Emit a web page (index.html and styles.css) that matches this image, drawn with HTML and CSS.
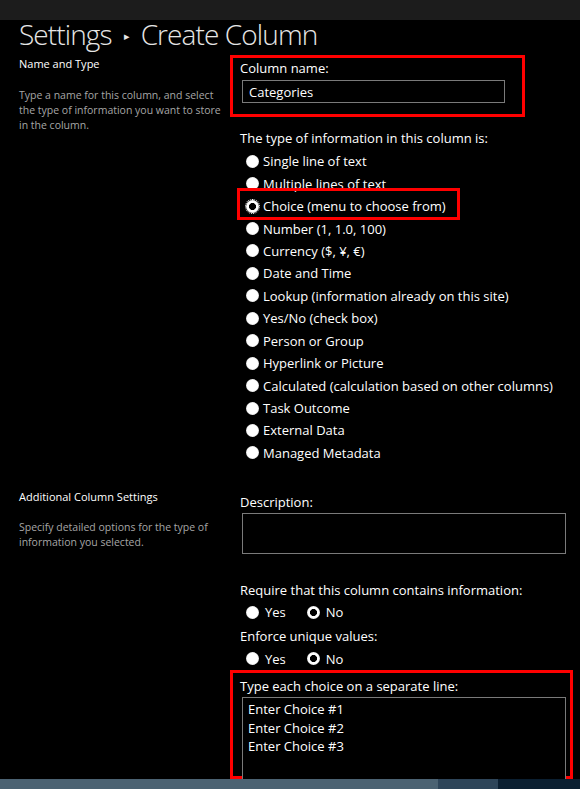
FILE: index.html
```html
<!DOCTYPE html>
<html lang="en">
<head>
<meta charset="utf-8">
<title>Settings - Create Column</title>
<link rel="stylesheet" href="styles.css">
</head>
<body>
<div class="topbar"></div>
<h1 class="title"><span>Settings</span><span class="crumb-sep">&#9656;</span><span>Create Column</span></h1>

<section class="section section-name">
  <div class="side">
    <h2 class="side-title">Name and Type</h2>
    <p class="side-desc">Type a name for this column, and select<br>the type of information you want to store<br>in the column.</p>
  </div>
  <div class="main">
    <div class="highlight hl-name">
      <label class="field-label" for="colname">Column name:</label>
      <input class="text-input" id="colname" type="text" value="Categories">
    </div>
    <div class="field-label type-label">The type of information in this column is:</div>
    <ul class="radio-list">
      <li class="radio-row"><input type="radio" name="type" class="radio"><span>Single line of text</span></li>
      <li class="radio-row"><input type="radio" name="type" class="radio"><span>Multiple lines of text</span></li>
      <li class="radio-row marked"><input type="radio" name="type" class="radio focused" checked><span>Choice (menu to choose from)</span></li>
      <li class="radio-row"><input type="radio" name="type" class="radio"><span>Number (1, 1.0, 100)</span></li>
      <li class="radio-row"><input type="radio" name="type" class="radio"><span>Currency ($, ¥, €)</span></li>
      <li class="radio-row"><input type="radio" name="type" class="radio"><span>Date and Time</span></li>
      <li class="radio-row"><input type="radio" name="type" class="radio"><span>Lookup (information already on this site)</span></li>
      <li class="radio-row"><input type="radio" name="type" class="radio"><span>Yes/No (check box)</span></li>
      <li class="radio-row"><input type="radio" name="type" class="radio"><span>Person or Group</span></li>
      <li class="radio-row"><input type="radio" name="type" class="radio"><span>Hyperlink or Picture</span></li>
      <li class="radio-row"><input type="radio" name="type" class="radio"><span>Calculated (calculation based on other columns)</span></li>
      <li class="radio-row"><input type="radio" name="type" class="radio"><span>Task Outcome</span></li>
      <li class="radio-row"><input type="radio" name="type" class="radio"><span>External Data</span></li>
      <li class="radio-row"><input type="radio" name="type" class="radio"><span>Managed Metadata</span></li>
    </ul>
  </div>
</section>

<section class="section section-extra">
  <div class="side">
    <h2 class="side-title">Additional Column Settings</h2>
    <p class="side-desc">Specify detailed options for the type of<br>information you selected.</p>
  </div>
  <div class="main">
    <div class="field-label">Description:</div>
    <textarea class="text-area desc-area"></textarea>
    <div class="field-label req-label">Require that this column contains information:</div>
    <div class="inline-radios req-radios">
      <label class="radio-row"><input type="radio" name="req" class="radio"><span>Yes</span></label>
      <label class="radio-row"><input type="radio" name="req" class="radio" checked><span>No</span></label>
    </div>
    <div class="field-label uniq-label">Enforce unique values:</div>
    <div class="inline-radios uniq-radios">
      <label class="radio-row"><input type="radio" name="uniq" class="radio"><span>Yes</span></label>
      <label class="radio-row"><input type="radio" name="uniq" class="radio" checked><span>No</span></label>
    </div>
    <div class="highlight hl-choices">
      <div class="field-label">Type each choice on a separate line:</div>
      <textarea class="text-area choice-area">Enter Choice #1
Enter Choice #2
Enter Choice #3</textarea>
    </div>
  </div>
</section>

<div class="statusbar">
  <div class="seg seg-a"></div>
  <div class="seg seg-b"></div>
  <div class="seg seg-c"></div>
</div>
</body>
</html>
```
FILE: styles.css
```css
html, body {
  margin: 0;
  padding: 0;
  background: #000;
  height: 100%;
  overflow: hidden;
}
body {
  font-family: "Open Sans", "Noto Sans", "Liberation Sans", sans-serif;
  color: #fff;
  font-size: 13px;
  position: relative;
}
.topbar {
  height: 20px;
  background: #1c1c1c;
}
.title {
  margin: 0;
  padding-left: 19px;
  height: 35px;
  font-size: 28px;
  line-height: 28px;
  font-weight: 300;
  color: #e6e6e6;
  letter-spacing: -0.9px;
  white-space: nowrap;
}
.crumb-sep {
  font-size: 11px;
  display: inline-block;
  margin: 0 11px 0 12px;
  vertical-align: 5px;
  letter-spacing: 0;
  color: #e6e6e6;
}
.section {
  display: grid;
  grid-template-columns: 211px 1fr;
  padding-left: 19px;
}
.side-title {
  margin: 0;
  font-size: 11px;
  font-weight: 400;
  line-height: 15px;
  color: #fff;
  padding-top: 1px;
}
.side-desc {
  margin: 17px 0 0;
  font-size: 10.5px;
  line-height: 15px;
  color: #a6a6a6;
  white-space: nowrap;
}
.main {
  display: flex;
  flex-direction: column;
  align-items: flex-start;
}
.highlight {
  border: 3px solid #ff0000;
  box-sizing: border-box;
  padding: 2px 7px 0;
}
.hl-name {
  width: 295px;
  height: 62px;
}
.field-label {
  display: block;
  font-size: 13px;
  line-height: 17px;
  color: #fff;
}
.text-input {
  display: block;
  box-sizing: border-box;
  margin: 3px 0 0 2px;
  width: 263px;
  height: 23px;
  border: 1px solid #7a7a7a;
  background: #000;
  color: #fff;
  font: inherit;
  font-size: 13px;
  padding: 0 6px;
  outline: none;
}
.type-label {
  margin: 13px 0 0 10px;
}
.radio-list {
  list-style: none;
  margin: 3px 0 0 16px;
  padding: 0;
}
.radio-row {
  display: flex;
  align-items: center;
  height: 22.45px;
  font-size: 13px;
  color: #fff;
  white-space: nowrap;
}
.radio {
  appearance: none;
  -webkit-appearance: none;
  margin: 0 4px 0 0;
  width: 13px;
  height: 13px;
  border-radius: 50%;
  background: radial-gradient(circle, #fff 55%, #dcdcdc 75%, #9a9a9a 100%);
  flex: none;
}
.radio:checked {
  background: radial-gradient(circle, #000 0, #000 3.2px, #fff 3.8px, #fff 55%, #dcdcdc 75%, #9a9a9a 100%);
}
.radio.focused {
  outline: 1px dotted #fff;
  outline-offset: 0;
}
.marked {
  position: relative;
}
.marked::after {
  content: "";
  position: absolute;
  left: -9px;
  top: -7px;
  width: 223px;
  height: 32px;
  border: 3px solid #ff0000;
  box-sizing: border-box;
  pointer-events: none;
}
.section-extra {
  margin-top: 25px;
}
.section-extra .side-title {
  padding-top: 0;
}
.section-extra .side-desc {
  margin-top: 16px;
}
.section-extra .main {
  padding-left: 10px;
  padding-top: 5px;
}
.desc-area {
  margin: 2px 0 0 2px;
}
.text-area {
  display: block;
  box-sizing: border-box;
  width: 324px;
  height: 41px;
  border: 1px solid #7a7a7a;
  background: #000;
  color: #fff;
  font: inherit;
  font-size: 13px;
  line-height: 18.5px;
  padding: 2px 6px;
  resize: none;
  outline: none;
  overflow: hidden;
}
.req-label {
  margin-top: 28px;
}
.inline-radios {
  display: flex;
  gap: 21px;
  margin-left: 6px;
}
.inline-radios .radio {
  margin-right: 6px;
}
.req-radios {
  margin-top: 2px;
}
.uniq-label {
  margin-top: 4px;
}
.uniq-radios {
  margin-top: 3px;
}
.hl-choices {
  margin: 0 0 0 -10px;
  width: 343px;
  height: 109px;
  padding-top: 5px;
}
.choice-area {
  margin: 2px 0 0 2px;
  height: 100px;
  padding: 2px 5px;
}
.statusbar {
  position: absolute;
  left: 0;
  right: 0;
  bottom: 0;
  height: 10px;
  display: flex;
}
.seg-a { width: 438px; background: #4b6272; }
.seg-b { width: 60px; background: #2e4559; }
.seg-c { flex: 1; background: #0b1f31; }
```
